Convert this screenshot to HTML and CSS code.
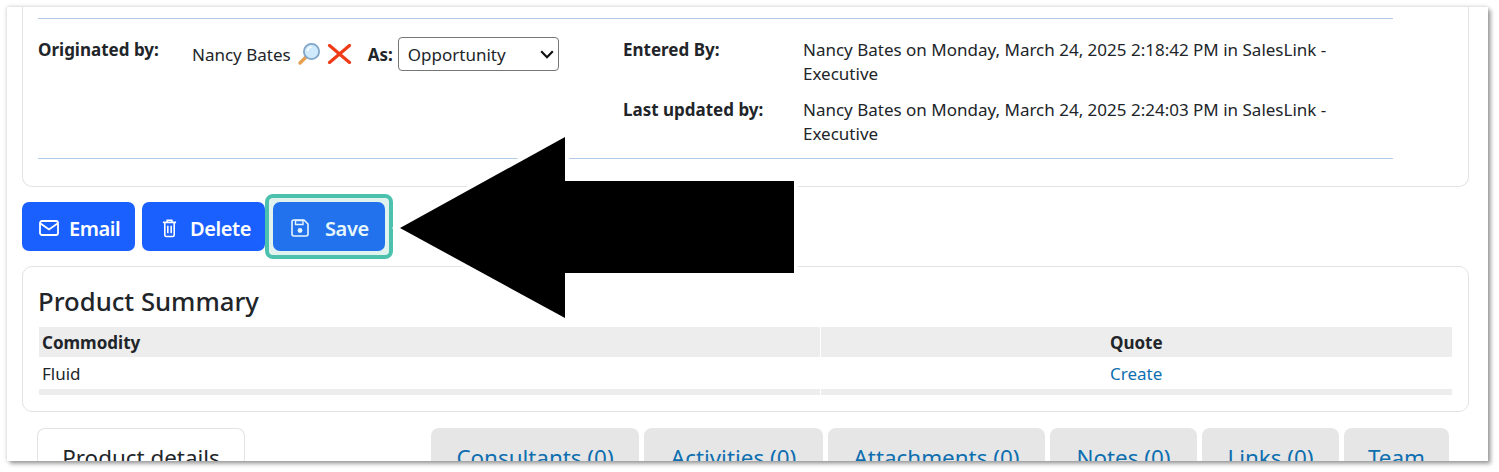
FILE: index.html
```html
<!DOCTYPE html>
<html lang="en">
<head>
<meta charset="utf-8">
<title>Opportunity</title>
<link rel="stylesheet" href="styles.css">
</head>
<body>
<div class="frame">
  <section class="card top-card">
    <hr class="rule">
    <div class="info">
      <div class="label origin-label">Originated by:</div>
      <div class="origin">
        <span>Nancy Bates</span>
        <svg class="mag" viewBox="0 0 24 24" width="24" height="24"><path d="M10 14 L3 21" stroke="#e8a050" stroke-width="3.4" stroke-linecap="round"/><circle cx="14.5" cy="9.5" r="7.6" fill="#cfeafc" stroke="#7fa6c8" stroke-width="1.8"/><path d="M10.5 9 a4.5 4.5 0 0 1 4-4" stroke="#fff" stroke-width="1.5" fill="none"/></svg>
        <svg class="cross" viewBox="0 0 24 20" width="25" height="20"><path d="M2 1.5 L22 18.5 M22 1.5 L2 18.5" stroke="#ee3b18" stroke-width="3.2" stroke-linecap="round"/></svg>
        <b class="as">As:</b>
        <span class="picker-wrap">
          <select class="picker"><option>Opportunity</option></select>
          <svg class="chevron" viewBox="0 0 14 9" width="14" height="9"><path d="M1.2 1.2 L7 7.2 L12.8 1.2" fill="none" stroke="#111" stroke-width="2.2"/></svg>
        </span>
      </div>
      <div class="stamps">
        <div class="label">Entered By:</div>
        <div class="stamp">Nancy Bates on Monday, March 24, 2025 2:18:42 PM in SalesLink -<br>Executive</div>
        <div class="label">Last updated by:</div>
        <div class="stamp">Nancy Bates on Monday, March 24, 2025 2:24:03 PM in SalesLink -<br>Executive</div>
      </div>
    </div>
    <hr class="rule">
  </section>

  <div class="actions">
    <button class="btn email"><svg viewBox="0 0 20 16" width="20" height="16"><rect x="1" y="1" width="18" height="14" rx="2" fill="none" stroke="currentColor" stroke-width="1.8"/><path d="M1.5 3.5 L10 9.5 L18.5 3.5" fill="none" stroke="currentColor" stroke-width="1.8"/></svg>Email</button>
    <button class="btn delete"><svg viewBox="0 0 16 20" width="15" height="19"><path d="M1 3.5 H15 M5.5 3 V1.2 H10.5 V3 M3 4 V17 a1.5 1.5 0 0 0 1.5 1.5 H11.5 a1.5 1.5 0 0 0 1.5 -1.5 V4 M6.2 7 V15 M9.8 7 V15" fill="none" stroke="currentColor" stroke-width="1.7"/></svg>Delete</button>
    <span class="focus-ring"><button class="btn save"><svg viewBox="0 0 18 18" width="18" height="18"><path d="M1 3 a2 2 0 0 1 2 -2 H13 L17 5 V15 a2 2 0 0 1 -2 2 H3 a2 2 0 0 1 -2 -2 Z" fill="none" stroke="currentColor" stroke-width="1.6"/><path d="M4.5 1.5 H12 V5.5 H4.5 Z" fill="none" stroke="currentColor" stroke-width="1.4"/><circle cx="9" cy="11.5" r="2.4" fill="currentColor"/></svg>Save</button></span>
  </div>

  <section class="card summary">
    <h2 class="summary-title">Product Summary</h2>
    <div class="grid-table">
      <div class="th">Commodity</div>
      <div class="th quote-cell">Quote</div>
      <div class="td">Fluid</div>
      <div class="td quote-cell"><a class="link" href="#">Create</a></div>
      <div class="tf"></div>
      <div class="tf"></div>
    </div>
  </section>

  <nav class="tabs">
    <div class="tab active">Product details</div>
    <div class="tab-group">
      <a class="tab w1" href="#">Consultants (0)</a>
      <a class="tab w2" href="#">Activities (0)</a>
      <a class="tab w3" href="#">Attachments (0)</a>
      <a class="tab w4" href="#">Notes (0)</a>
      <a class="tab w5" href="#">Links (0)</a>
      <a class="tab w6" href="#">Team</a>
    </div>
  </nav>

  <svg class="arrow" width="420" height="200" viewBox="395 130 420 200"><path d="M400 228 L565 137 V181 H794 V273 H565 V318 Z" fill="#000" stroke="#fff" stroke-width="8" paint-order="stroke"/></svg>
</div>
</body>
</html>
```
FILE: styles.css
```css
* { box-sizing: border-box; }
html, body { margin: 0; padding: 0; background: #fff; }
body {
  width: 1499px;
  height: 472px;
  overflow: hidden;
  font-family: "Noto Sans", "Open Sans", sans-serif;
  font-size: 17px;
  color: #212529;
}
.frame {
  position: relative;
  margin: 7px 0 0 7px;
  width: 1481px;
  height: 454px;
  padding: 0 19px 0 15px;
  overflow: hidden;
  background: #fff;
}
body::before {
  content: "";
  position: absolute;
  left: 7px;
  top: 7px;
  width: 1481px;
  height: 454px;
  box-shadow: 3px 3px 4px rgba(0,0,0,.32), 0 0 4px rgba(0,0,0,.22);
}
.card {
  width: 1447px;
  background: #fff;
  border: 1px solid #e3e3e3;
  border-radius: 10px;
}
.top-card {
  height: 180px;
  border-top: 0;
  border-radius: 0 0 10px 10px;
  padding: 11px 0 0 15px;
}
.rule {
  width: 1355px;
  height: 1px;
  margin: 0;
  border: 0;
  background: #b4cbe8;
}
.info {
  display: grid;
  grid-template-columns: 154px 431px 1fr;
  height: 139px;
  padding-top: 18px;
  width: 1355px;
}
.label { font-weight: 700; line-height: 24px; }
.origin-label { margin-top: 1px; }
.origin {
  display: flex;
  align-items: center;
  height: 34px;
}
.mag { margin-left: 6px; }
.cross { margin-left: 6px; }
.as { margin-left: 16px; margin-right: 5px; }
.picker-wrap {
  position: relative;
  display: block;
  width: 161px;
  height: 34px;
}
.picker {
  display: block;
  width: 161px;
  height: 34px;
  padding: 0 9px;
  font: inherit;
  color: #212529;
  background: #fff;
  border: 1px solid #767676;
  border-radius: 4px;
  appearance: none;
}
.chevron {
  position: absolute;
  right: 5px;
  top: 13px;
  pointer-events: none;
}
.stamps {
  display: grid;
  grid-template-columns: 180px 1fr;
  grid-auto-rows: min-content;
  row-gap: 12px;
  margin-top: 1px;
}
.stamp { line-height: 24px; }
.actions {
  display: flex;
  align-items: center;
  gap: 7px;
  height: 79px;
}
.btn {
  display: inline-flex;
  align-items: center;
  height: 49px;
  padding: 3px 0 0;
  border: 0;
  border-radius: 7px;
  color: #fff;
  font: 600 20px "Noto Sans", sans-serif;
  letter-spacing: -.4px;
  background: #1a60ff;
}
.email { width: 113px; padding-left: 17px; gap: 10px; }
.delete { width: 123px; padding-left: 20px; gap: 13px; }
.focus-ring {
  display: inline-flex;
  margin-left: -7px;
  padding: 4px;
  border: 4px solid #4cc2ae;
  border-radius: 8px;
  background: #e0f3ef;
}
.save { width: 112px; padding-left: 18px; gap: 16px; background: #2272ee; color: #e6f6fb; }
.summary {
  height: 146px;
  padding: 16px 15px 0;
}
.summary-title {
  margin: 0 0 7px;
  font-size: 25.7px;
  line-height: 37px;
  font-weight: 500;
}
.grid-table {
  display: grid;
  grid-template-columns: 781px 631px;
  column-gap: 1px;
  grid-template-rows: 30px 32px 6px;
  width: 1413px;
  margin-left: 1px;
}
.th {
  background: #ededed;
  font-weight: 700;
  line-height: 32px;
  height: 30px;
  padding-left: 3px;
}
.td { line-height: 34px; height: 32px; padding-left: 3px; }
.quote-cell { padding-left: 289px; }
.tf { background: #ededed; }
.link { color: #0e6fb0; text-decoration: none; }
.tabs {
  display: flex;
  justify-content: space-between;
  width: 1412px;
  margin: 16px 0 0 15px;
}
.tab-group { display: flex; gap: 5px; }
.tab {
  display: block;
  height: 70px;
  padding-top: 14px;
  border-radius: 8px 8px 0 0;
  background: #e6e6e6;
  color: #0e6fb0;
  font-size: 22.4px;
  line-height: 32px;
  text-align: center;
  text-decoration: none;
}
.active { width: 208px; background: #fff; color: #212529; border: 1px solid #e3e3e3; border-bottom: 0; padding-top: 13px; }
.w1 { width: 208px; }
.w2 { width: 179px; }
.w3 { width: 217px; }
.w4 { width: 147px; }
.w5 { width: 137px; }
.w6 { width: 105px; }
.arrow { position: absolute; left: 388px; top: 123px; overflow: visible; }
```
